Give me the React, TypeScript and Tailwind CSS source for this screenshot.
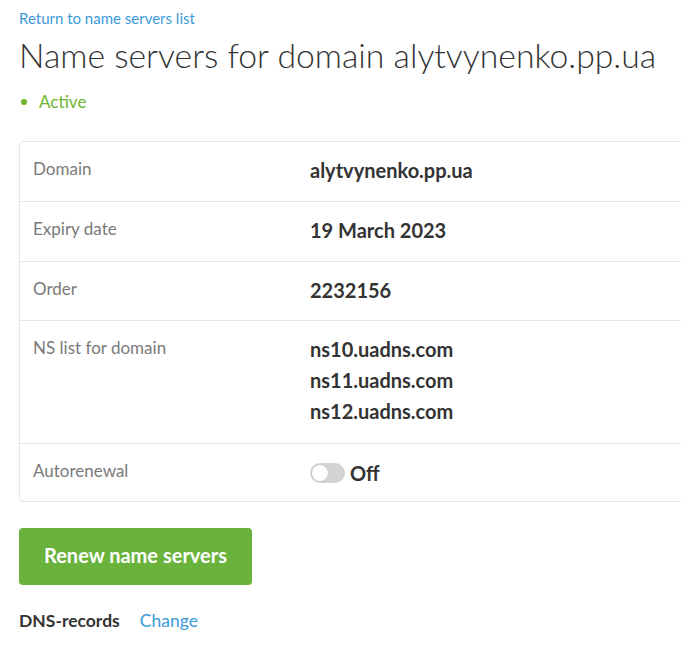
export default function App() {
  const font = { fontFamily: "Lato, 'Noto Sans', sans-serif" };
  const Label = ({ children }: { children: React.ReactNode }) => (
    <div className="w-[290px] shrink-0 pl-[13px] pt-[15px] text-[17px] leading-[24px] text-[#7a7a7a]">{children}</div>
  );
  const Row = ({ label, children, h }: { label: string; children: React.ReactNode; h: string }) => (
    <div className={`flex ${h} border-b border-[#e6e6e6]`}>
      <Label>{label}</Label>
      <div className="pt-[14px] text-[20px] leading-[28px] font-bold text-[#333]">{children}</div>
    </div>
  );
  return (
    <div className="w-[681px] h-[645px] overflow-hidden bg-white" style={font}>
      <div className="pl-[19px] pt-[8px]">
        <a className="block text-[15px] leading-[20px] text-[#3b9ad8]">Return to name servers list</a>
        <h1 className="mt-[7px] text-[33.75px] leading-[40px] font-light text-[#333]">
          Name servers for domain alytvynenko.pp.ua
        </h1>
        <div className="mt-[15px] flex items-center text-[17px] leading-[24px] text-[#6fb52f]">
          <span className="ml-[2px] mr-[12px] h-[6px] w-[6px] rounded-full bg-[#6fb52f]" />
          Active
        </div>
        <div className="mt-[27px] w-[720px] rounded-[4px] border border-[#e6e6e6]">
          <Row label="Domain" h="h-[60px]">alytvynenko.pp.ua</Row>
          <Row label="Expiry date" h="h-[60px]">19 March 2023</Row>
          <Row label="Order" h="h-[59px]">2232156</Row>
          <div className="flex h-[123px] border-b border-[#e6e6e6]">
            <Label>NS list for domain</Label>
            <div className="pt-[13px] text-[20px] leading-[31px] font-bold text-[#333]">
              <div>ns10.uadns.com</div>
              <div>ns11.uadns.com</div>
              <div>ns12.uadns.com</div>
            </div>
          </div>
          <div className="flex h-[57px]">
            <Label>Autorenewal</Label>
            <div className="flex items-center gap-[5px] pt-[19px] self-start">
              <span className="relative inline-block h-[20px] w-[35px] rounded-full bg-[#d2d3d4]">
                <span className="absolute left-[2px] top-[2px] h-[16px] w-[16px] rounded-full bg-white shadow-[0_0_1px_rgba(0,0,0,0.2)]" />
              </span>
              <span className="text-[20px] leading-[20px] font-bold text-[#333]">Off</span>
            </div>
          </div>
        </div>
        <button className="mt-[26px] h-[57px] w-[233px] rounded-[4px] bg-[#69b33c] pb-[4px] text-[20px] font-bold text-white">
          Renew name servers
        </button>
        <div className="mt-[24px] flex items-center text-[17.5px] leading-[24px]">
          <span className="font-bold text-[#333]">DNS-records</span>
          <a className="ml-[20px] text-[#3b9ad8]">Change</a>
        </div>
      </div>
    </div>
  );
}
